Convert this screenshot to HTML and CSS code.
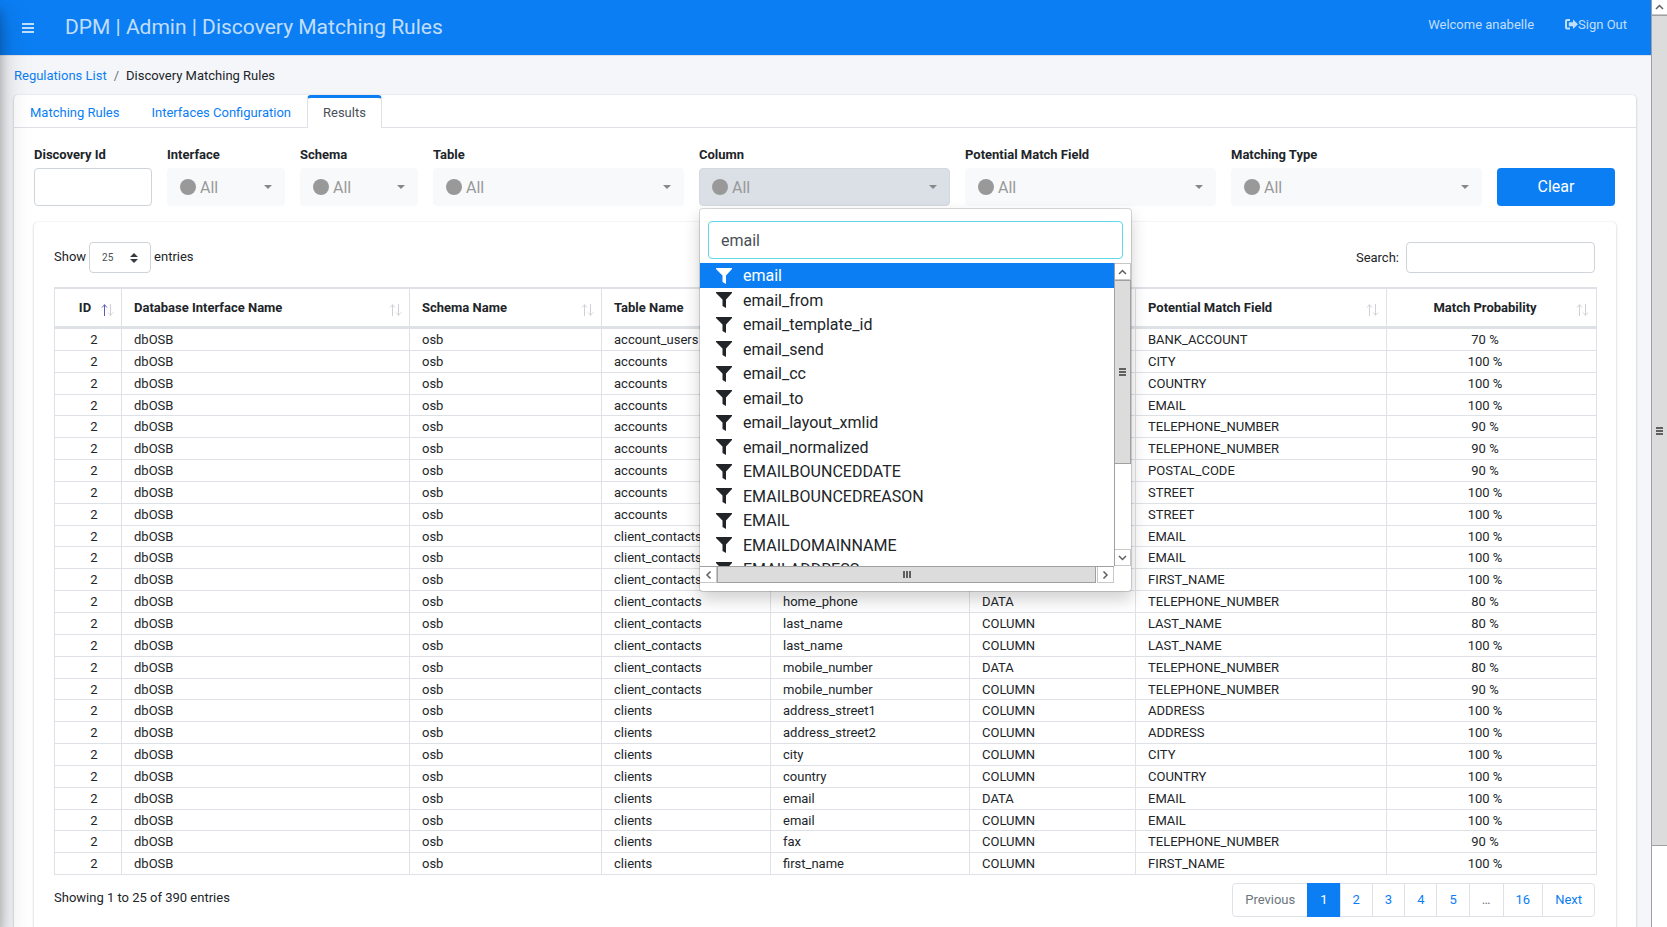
FILE: index.html
```
<!DOCTYPE html>
<html lang="en">
<head>
<meta charset="utf-8">
<title>DPM | Admin | Discovery Matching Rules</title>
<link rel="stylesheet" href="styles.css">
</head>
<body>
<svg class="sprite" aria-hidden="true">
  <symbol id="i-filter" viewBox="0 0 16 16"><path d="M0 0h16v1L10 7.500V16L6.500 14V7.500L0 1z"/></symbol>
  <symbol id="i-sort" viewBox="0 0 14 12"><path class="up" d="M4.500 0.500V12M2 3.500L4.500 0.800L7 3.500"/><path class="down" d="M10.500 0V11.500M8 8.500L10.500 11.200L13 8.500"/></symbol>
  <symbol id="i-up" viewBox="0 0 9 6"><path d="M1 5L4.500 1.500L8 5"/></symbol>
</svg>
<div class="app">
  <div class="page">
    <aside class="sidebar-edge"></aside>
    <header class="topbar">
      <button class="menu-btn" aria-label="Toggle menu"><svg width="12" height="10" viewBox="0 0 12 10"><path d="M0 0h12v2H0zM0 4h12v2H0zM0 8h12v2H0z"/></svg></button>
      <h1 class="title">DPM | Admin | Discovery Matching Rules</h1>
      <nav class="user-nav">
        <a href="#">Welcome anabelle</a>
        <a href="#" class="signout"><svg width="13" height="11" viewBox="0 0 13 11"><path d="M5 0v2H2.500Q2 2 2 2.500v5.500Q2 8.500 2.500 8.500H5v2H2Q0 10.500 0 8.500V2Q0 0 2 0zM8 0.500L13 5.250L8 10V7.200H4.200Q3.800 7.200 3.800 6.800V3.700Q3.800 3.300 4.200 3.300H8z"/></svg>Sign Out</a>
      </nav>
    </header>
    <main class="content">
      <nav class="breadcrumb"><a href="#">Regulations List</a><span class="sep">/</span><span>Discovery Matching Rules</span></nav>
      <section class="card">
        <nav class="tabs">
          <a href="#" class="tab">Matching Rules</a>
          <a href="#" class="tab">Interfaces Configuration</a>
          <a href="#" class="tab active">Results</a>
        </nav>
        <div class="card-body">
          <form class="filters">
            <div class="field"><label for="f-id">Discovery Id</label><input id="f-id" class="control" type="text"></div>
            <div class="field"><label for="f-if">Interface</label><div class="pick"><i class="dot"></i><select id="f-if"><option>All</option></select><i class="caret"></i></div></div>
            <div class="field"><label for="f-sc">Schema</label><div class="pick"><i class="dot"></i><select id="f-sc"><option>All</option></select><i class="caret"></i></div></div>
            <div class="field wide"><label for="f-tb">Table</label><div class="pick"><i class="dot"></i><select id="f-tb"><option>All</option></select><i class="caret"></i></div></div>
            <div class="field wide"><label for="f-col">Column</label>
              <div class="pick open"><i class="dot"></i><select id="f-col"><option>All</option></select><i class="caret"></i>
                <div class="menu">
                  <input class="control menu-search" type="text" value="email" aria-label="Search columns">
                  <div class="menu-view">
                    <ul class="menu-list">
                      <li class="sel"><svg><use href="#i-filter"/></svg>email</li>
                      <li><svg><use href="#i-filter"/></svg>email_from</li>
                      <li><svg><use href="#i-filter"/></svg>email_template_id</li>
                      <li><svg><use href="#i-filter"/></svg>email_send</li>
                      <li><svg><use href="#i-filter"/></svg>email_cc</li>
                      <li><svg><use href="#i-filter"/></svg>email_to</li>
                      <li><svg><use href="#i-filter"/></svg>email_layout_xmlid</li>
                      <li><svg><use href="#i-filter"/></svg>email_normalized</li>
                      <li><svg><use href="#i-filter"/></svg>EMAILBOUNCEDDATE</li>
                      <li><svg><use href="#i-filter"/></svg>EMAILBOUNCEDREASON</li>
                      <li><svg><use href="#i-filter"/></svg>EMAIL</li>
                      <li><svg><use href="#i-filter"/></svg>EMAILDOMAINNAME</li>
                      <li><svg><use href="#i-filter"/></svg>EMAILADDRESS</li>
                    </ul>
                    <div class="vbar"><span class="sb-btn"><svg class="chev"><use href="#i-up"/></svg></span><span class="thumb"><i class="grip"></i></span><span class="sb-btn end"><svg class="chev flip"><use href="#i-up"/></svg></span></div>
                    <div class="hbar"><span class="sb-btn"><svg class="chev left"><use href="#i-up"/></svg></span><span class="thumb"><i class="grip"></i></span><span class="sb-btn end"><svg class="chev right"><use href="#i-up"/></svg></span></div>
                  </div>
                </div>
              </div>
            </div>
            <div class="field wide"><label for="f-pm">Potential Match Field</label><div class="pick"><i class="dot"></i><select id="f-pm"><option>All</option></select><i class="caret"></i></div></div>
            <div class="field wide"><label for="f-mt">Matching Type</label><div class="pick"><i class="dot"></i><select id="f-mt"><option>All</option></select><i class="caret"></i></div></div>
            <button class="clear" type="button">Clear</button>
          </form>
          <section class="panel">
            <div class="tools">
              <div class="length"><label for="len">Show</label><span class="len-box"><select id="len"><option>25</option></select><svg width="8" height="10" viewBox="0 0 8 10"><path d="M0 4L4 0L8 4zM0 6L4 10L8 6z"/></svg></span><span class="unit">entries</span></div>
              <div class="search"><label for="q">Search:</label><input id="q" type="search"></div>
            </div>
            <table class="grid">
              <colgroup><col class="c1"><col class="c2"><col class="c3"><col class="c4"><col class="c5"><col class="c6"><col class="c7"><col class="c8"></colgroup>
              <thead><tr>
                <th class="asc"><button><span>ID</span><svg><use href="#i-sort"/></svg></button></th>
                <th><button><span>Database Interface Name</span><svg><use href="#i-sort"/></svg></button></th>
                <th><button><span>Schema Name</span><svg><use href="#i-sort"/></svg></button></th>
                <th><button><span>Table Name</span><svg><use href="#i-sort"/></svg></button></th>
                <th><button><span>Column Name</span><svg><use href="#i-sort"/></svg></button></th>
                <th><button><span>Matching Type</span><svg><use href="#i-sort"/></svg></button></th>
                <th><button><span>Potential Match Field</span><svg><use href="#i-sort"/></svg></button></th>
                <th><button><span>Match Probability</span><svg><use href="#i-sort"/></svg></button></th>
              </tr></thead>
              <tbody>
                <tr><td>2</td><td>dbOSB</td><td>osb</td><td>account_users</td><td>account</td><td>DATA</td><td>BANK_ACCOUNT</td><td>70 %</td></tr>
                <tr><td>2</td><td>dbOSB</td><td>osb</td><td>accounts</td><td>city</td><td>COLUMN</td><td>CITY</td><td>100 %</td></tr>
                <tr><td>2</td><td>dbOSB</td><td>osb</td><td>accounts</td><td>country</td><td>COLUMN</td><td>COUNTRY</td><td>100 %</td></tr>
                <tr><td>2</td><td>dbOSB</td><td>osb</td><td>accounts</td><td>email</td><td>COLUMN</td><td>EMAIL</td><td>100 %</td></tr>
                <tr><td>2</td><td>dbOSB</td><td>osb</td><td>accounts</td><td>fax</td><td>COLUMN</td><td>TELEPHONE_NUMBER</td><td>90 %</td></tr>
                <tr><td>2</td><td>dbOSB</td><td>osb</td><td>accounts</td><td>phone</td><td>COLUMN</td><td>TELEPHONE_NUMBER</td><td>90 %</td></tr>
                <tr><td>2</td><td>dbOSB</td><td>osb</td><td>accounts</td><td>postal_code</td><td>COLUMN</td><td>POSTAL_CODE</td><td>90 %</td></tr>
                <tr><td>2</td><td>dbOSB</td><td>osb</td><td>accounts</td><td>street1</td><td>COLUMN</td><td>STREET</td><td>100 %</td></tr>
                <tr><td>2</td><td>dbOSB</td><td>osb</td><td>accounts</td><td>street2</td><td>COLUMN</td><td>STREET</td><td>100 %</td></tr>
                <tr><td>2</td><td>dbOSB</td><td>osb</td><td>client_contacts</td><td>email</td><td>DATA</td><td>EMAIL</td><td>100 %</td></tr>
                <tr><td>2</td><td>dbOSB</td><td>osb</td><td>client_contacts</td><td>email</td><td>COLUMN</td><td>EMAIL</td><td>100 %</td></tr>
                <tr><td>2</td><td>dbOSB</td><td>osb</td><td>client_contacts</td><td>first_name</td><td>COLUMN</td><td>FIRST_NAME</td><td>100 %</td></tr>
                <tr><td>2</td><td>dbOSB</td><td>osb</td><td>client_contacts</td><td>home_phone</td><td>DATA</td><td>TELEPHONE_NUMBER</td><td>80 %</td></tr>
                <tr><td>2</td><td>dbOSB</td><td>osb</td><td>client_contacts</td><td>last_name</td><td>COLUMN</td><td>LAST_NAME</td><td>80 %</td></tr>
                <tr><td>2</td><td>dbOSB</td><td>osb</td><td>client_contacts</td><td>last_name</td><td>COLUMN</td><td>LAST_NAME</td><td>100 %</td></tr>
                <tr><td>2</td><td>dbOSB</td><td>osb</td><td>client_contacts</td><td>mobile_number</td><td>DATA</td><td>TELEPHONE_NUMBER</td><td>80 %</td></tr>
                <tr><td>2</td><td>dbOSB</td><td>osb</td><td>client_contacts</td><td>mobile_number</td><td>COLUMN</td><td>TELEPHONE_NUMBER</td><td>90 %</td></tr>
                <tr><td>2</td><td>dbOSB</td><td>osb</td><td>clients</td><td>address_street1</td><td>COLUMN</td><td>ADDRESS</td><td>100 %</td></tr>
                <tr><td>2</td><td>dbOSB</td><td>osb</td><td>clients</td><td>address_street2</td><td>COLUMN</td><td>ADDRESS</td><td>100 %</td></tr>
                <tr><td>2</td><td>dbOSB</td><td>osb</td><td>clients</td><td>city</td><td>COLUMN</td><td>CITY</td><td>100 %</td></tr>
                <tr><td>2</td><td>dbOSB</td><td>osb</td><td>clients</td><td>country</td><td>COLUMN</td><td>COUNTRY</td><td>100 %</td></tr>
                <tr><td>2</td><td>dbOSB</td><td>osb</td><td>clients</td><td>email</td><td>DATA</td><td>EMAIL</td><td>100 %</td></tr>
                <tr><td>2</td><td>dbOSB</td><td>osb</td><td>clients</td><td>email</td><td>COLUMN</td><td>EMAIL</td><td>100 %</td></tr>
                <tr><td>2</td><td>dbOSB</td><td>osb</td><td>clients</td><td>fax</td><td>COLUMN</td><td>TELEPHONE_NUMBER</td><td>90 %</td></tr>
                <tr><td>2</td><td>dbOSB</td><td>osb</td><td>clients</td><td>first_name</td><td>COLUMN</td><td>FIRST_NAME</td><td>100 %</td></tr>
              </tbody>
            </table>
            <div class="foot">
              <div class="info">Showing 1 to 25 of 390 entries</div>
              <nav class="pager">
                <a class="off">Previous</a><a href="#" class="on">1</a><a href="#">2</a><a href="#">3</a><a href="#">4</a><a href="#">5</a><a class="off">…</a><a href="#">16</a><a href="#">Next</a>
              </nav>
            </div>
          </section>
        </div>
      </section>
    </main>
  </div>
  <div class="page-bar"><span class="sb-btn"><svg class="chev"><use href="#i-up"/></svg></span><span class="thumb"><i class="grip"></i></span></div>
</div>
</body>
</html>
```
FILE: styles.css
```
* { box-sizing: border-box; }
body {
  margin: 0;
  font: 13px/1.5 Roboto, "Liberation Sans", sans-serif;
  color: #212529;
  background: #f4f6f9;
}
a { color: #0b7ef4; text-decoration: none; }
button, input, select { font-family: inherit; }
.sprite { display: none; }

.app { display: flex; height: 100vh; overflow: hidden; }
.page { flex: 1; min-width: 0; position: relative; overflow: hidden; }
.sidebar-edge {
  position: absolute; z-index: 5; top: 0; bottom: 0; left: -250px; width: 250px;
  box-shadow: 0 14px 28px rgba(0,0,0,.25), 0 10px 10px rgba(0,0,0,.22);
}

.topbar {
  display: flex; align-items: center;
  height: 56px; padding: 0 24px 0 22px;
  background: #0b7ef4;
  border-bottom: 1px solid #dee2e6;
}
.menu-btn { border: 0; padding: 0; background: none; line-height: 0; }
.menu-btn svg, .signout svg { fill: rgba(255,255,255,.75); }
.title { margin: 0 0 0 31px; padding-bottom: 2px; font-size: 21px; font-weight: 400; line-height: 32px; color: rgba(255,255,255,.75); }
.user-nav { display: flex; gap: 31px; margin-left: auto; padding-bottom: 6px; }
.user-nav a { display: flex; align-items: center; color: rgba(255,255,255,.75); }

.content { padding: 10px 15px 0 14px; }
.breadcrumb { display: flex; line-height: 20px; padding-bottom: 9px; }
.sep { padding: 0 7px; color: #6c757d; }
.card { background: #fff; border-radius: 4px; box-shadow: 0 0 1px rgba(0,0,0,.13), 0 1px 3px rgba(0,0,0,.2); }
.tabs { display: flex; border-bottom: 1px solid #dee2e6; }
.tab { padding: 5px 15px 4px; border: 1px solid transparent; border-top-width: 3px; border-bottom: 0; line-height: 20px; }
.tab.active { color: #495057; background: #fff; border-color: #0b7ef4 #dee2e6 #fff; border-radius: 4px 4px 0 0; margin-bottom: -1px; }
.card-body { padding: 17px 20px 40px; }

.filters { display: grid; grid-template-columns: repeat(12, minmax(0, 1fr)); gap: 15px; align-items: end; padding-right: 1px; }
.field label { display: block; margin-bottom: 3px; font-weight: 700; line-height: 20px; }
.wide { grid-column: span 2; }
.control { display: block; width: 100%; height: 38px; padding: 6px 12px; border: 1px solid #ced4da; border-radius: 4px; font-size: 16px; color: #495057; background: #fff; outline: 0; }
.pick { position: relative; }
.pick select { display: block; width: 100%; height: 38px; padding: 0 32px; appearance: none; border: 1px solid #f8f9fa; border-radius: 4px; background: #f8f9fa; color: #999; font-size: 16px; }
.pick.open > select { background: #dae0e5; border-color: #d3d9df; }
.dot { position: absolute; left: 13px; top: 11px; width: 16px; height: 16px; border-radius: 50%; background: #999; pointer-events: none; }
.caret { position: absolute; right: 13px; top: 17px; border: 4px solid transparent; border-top-color: #888; border-bottom: 0; pointer-events: none; }
.clear { height: 38px; padding: 0 0 1px; border: 0; border-radius: 4px; background: #0b7ef4; color: #fff; font-size: 16px; }

.menu { position: absolute; z-index: 10; top: 40px; left: 0; width: 433px; padding: 12px 0 8px; background: #fff; border: 1px solid rgba(0,0,0,.15); background-clip: padding-box; border-radius: 4px; box-shadow: 0 8px 16px rgba(0,0,0,.175); }
.menu-search { width: auto; min-width: 415px; margin: 0 8px 4px; border-color: #5fd8e8; }
.menu-view { display: grid; grid-template-columns: 1fr 17px; grid-template-rows: 303px 17px; }
.menu-list { margin: 0; padding: 0; list-style: none; overflow: hidden; font-size: 16px; line-height: 1.47; }
.menu-list li { display: flex; align-items: center; gap: 11px; padding: 1px 0 0 16px; }
.menu-list svg { width: 16px; height: 16px; fill: currentColor; }
.menu-list .sel { background: #0b7ef4; color: #fff; }

.vbar, .hbar, .page-bar { display: flex; background: #fff; }
.vbar, .page-bar { flex-direction: column; border-left: 1px solid #a0a0a0; }
.sb-btn { flex: none; width: 16px; height: 17px; display: flex; align-items: center; justify-content: center; background: #fff; border: 1px solid #c8c8c8; border-left: 0; }
.end { margin-top: auto; }
.thumb { display: flex; align-items: center; justify-content: center; background: #dcdcdc; border: 1px solid #a0a0a0; }
.vbar .thumb { height: 184px; border-left: 0; }
.hbar { border-top: 1px solid #a0a0a0; }
.hbar .sb-btn { width: 17px; height: 16px; border-top: 0; }
.hbar .thumb { flex: 1; margin-right: 1px; border-top: 0; }
.hbar .end { margin-top: 0; border-left: 1px solid #c8c8c8; }
.chev { width: 9px; height: 6px; fill: none; stroke: #606060; stroke-width: 1.5; }
.flip { transform: rotate(180deg); }
.left { transform: rotate(-90deg); }
.right { transform: rotate(90deg); }
.grip { width: 7px; height: 8px; background: repeating-linear-gradient(#606060 0 2px, transparent 2px 3px); }
.hbar .grip { width: 8px; height: 7px; background: repeating-linear-gradient(90deg, #606060 0 2px, transparent 2px 3px); }
.page-bar { width: 16px; }
.page-bar .sb-btn { width: 15px; height: 15px; border-width: 0 0 1px; }
.page-bar .thumb { flex: none; height: calc(100% - 96px); border-width: 1px 0; }

.panel { margin-top: 16px; padding: 20px 21px 20px 20px; border-radius: 4px; box-shadow: 0 0 1px rgba(0,0,0,.13), 0 1px 3px rgba(0,0,0,.2); }
.tools { display: flex; justify-content: space-between; margin-bottom: 14px; }
.length, .search { display: flex; align-items: center; gap: 3px; }
.length label, .unit { padding-bottom: 2px; }
.len-box { position: relative; }
.len-box select { display: block; width: 62px; height: 31px; padding: 0 12px; appearance: none; border: 1px solid #ced4da; border-radius: 4px; background: #fff; font-size: 10px; color: #495057; }
.len-box svg { position: absolute; right: 13px; top: 11px; fill: #343a40; pointer-events: none; }
.search { gap: 7px; }
.search input { width: 189px; height: 31px; border: 1px solid #ced4da; border-radius: 4px; background: #fff; }

.grid { width: 100%; table-layout: fixed; border-collapse: collapse; border: 1px solid #dee2e6; }
.c1 { width: 67px; } .c2 { width: 288px; } .c3 { width: 192px; } .c4 { width: 169px; }
.c5 { width: 199px; } .c6 { width: 166px; } .c7 { width: 251px; } .c8 { width: 210px; }
.grid td { padding: 2px 12px 0; border: 1px solid #dee2e6; line-height: 1.45; }
.grid th { padding: 0; border: 1px solid #dee2e6; border-top-width: 2px; border-bottom-width: 3px; }
.grid th button { display: flex; width: 100%; height: 37px; padding: 9px 7px 0 12px; border: 0; background: none; color: inherit; font-size: 13px; font-weight: 700; line-height: 20px; text-align: left; }
.grid th span { flex: 1; white-space: nowrap; }
.grid th svg { flex: none; width: 14px; height: 12px; margin-top: 6px; fill: none; stroke: #d0d0d8; }
.up { stroke: var(--up, #d0d0d8); }
.asc { --up: #5c5cb8; }
.grid th:first-child button { padding-left: 15px; }
.grid th:last-child button { padding-left: 8px; }
.grid th:first-child span, .grid th:last-child span, .grid td:first-child, .grid td:last-child { text-align: center; }
.grid td:first-child { padding-left: 24px; }
.grid td:last-child { padding-right: 25px; }

.foot { display: flex; justify-content: space-between; align-items: flex-start; margin-top: 8px; }
.info { padding-top: 5px; line-height: 20px; }
.pager { display: flex; }
.pager a { padding: 8px 12px; line-height: 16px; border: 1px solid #dee2e6; margin-left: -1px; background: #fff; }
.pager a:first-child { border-radius: 4px 0 0 4px; }
.pager a:last-child { border-radius: 0 4px 4px 0; }
.pager .off { color: #6c757d; }
.pager .on { background: #0b7ef4; border-color: #0b7ef4; color: #fff; }
```
